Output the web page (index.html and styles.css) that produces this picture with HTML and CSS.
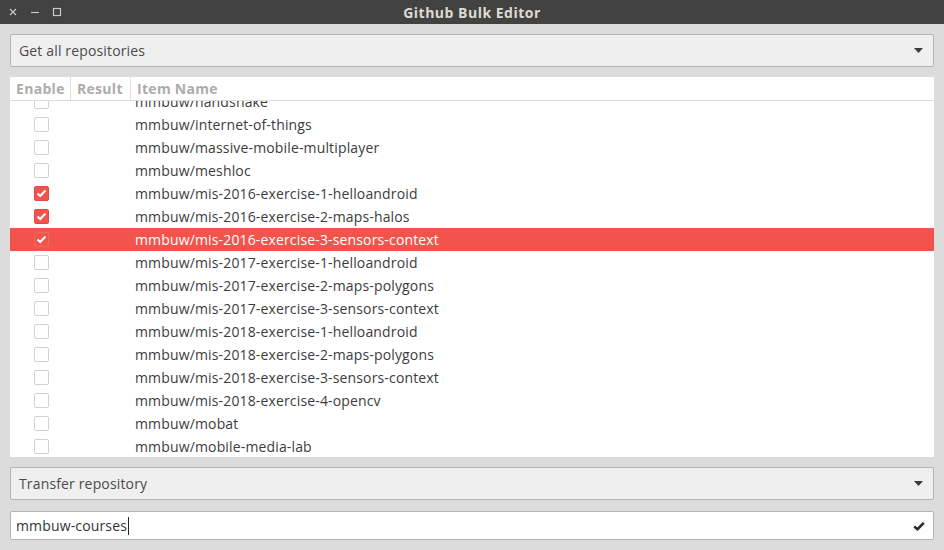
FILE: index.html
```html
<!DOCTYPE html>
<html>
<head>
<meta charset="utf-8">
<link rel="stylesheet" href="styles.css">
</head>
<body>
<div class="window">
  <div class="titlebar">
    <div class="wbtns">
      <svg class="wbtn" width="10" height="10" viewBox="0 0 10 10"><path d="M2 2L8 8M8 2L2 8" stroke="#c8c8c8" stroke-width="1.2"/></svg>
      <svg class="wbtn" width="10" height="10" viewBox="0 0 10 10"><path d="M1 5.5H9" stroke="#c8c8c8" stroke-width="1.2"/></svg>
      <svg class="wbtn" width="10" height="10" viewBox="0 0 10 10"><rect x="1.5" y="1.5" width="7" height="7" fill="none" stroke="#c8c8c8" stroke-width="1.2"/></svg>
    </div>
    <div class="title">Github Bulk Editor</div>
  </div>
  <div class="content">
    <div class="combo">
      <span>Get all repositories</span>
      <svg width="9" height="5" viewBox="0 0 9 5"><path d="M0 0H9L4.5 5Z" fill="#3c3c3c"/></svg>
    </div>
    <div class="tree">
      <div class="thead">
        <div class="th c1">Enable</div>
        <div class="th c2">Result</div>
        <div class="th c3">Item Name</div>
      </div>
      <div class="tbody">
        <div class="rows">
          <div class="row"><div class="c1"><span class="cb"></span></div><div class="c2"></div><div class="c3">mmbuw/handshake</div></div>
          <div class="row"><div class="c1"><span class="cb"></span></div><div class="c2"></div><div class="c3">mmbuw/internet-of-things</div></div>
          <div class="row"><div class="c1"><span class="cb"></span></div><div class="c2"></div><div class="c3">mmbuw/massive-mobile-multiplayer</div></div>
          <div class="row"><div class="c1"><span class="cb"></span></div><div class="c2"></div><div class="c3">mmbuw/meshloc</div></div>
          <div class="row"><div class="c1"><span class="cb on"><svg width="11" height="9" viewBox="0 0 11 9"><path d="M1.5 4.5L4.2 7L9.5 1.5" fill="none" stroke="#fff" stroke-width="2"/></svg></span></div><div class="c2"></div><div class="c3">mmbuw/mis-2016-exercise-1-helloandroid</div></div>
          <div class="row"><div class="c1"><span class="cb on"><svg width="11" height="9" viewBox="0 0 11 9"><path d="M1.5 4.5L4.2 7L9.5 1.5" fill="none" stroke="#fff" stroke-width="2"/></svg></span></div><div class="c2"></div><div class="c3">mmbuw/mis-2016-exercise-2-maps-halos</div></div>
          <div class="row sel"><div class="c1"><span class="cb on"><svg width="11" height="9" viewBox="0 0 11 9"><path d="M1.5 4.5L4.2 7L9.5 1.5" fill="none" stroke="#fff" stroke-width="2"/></svg></span></div><div class="c2"></div><div class="c3">mmbuw/mis-2016-exercise-3-sensors-context</div></div>
          <div class="row"><div class="c1"><span class="cb"></span></div><div class="c2"></div><div class="c3">mmbuw/mis-2017-exercise-1-helloandroid</div></div>
          <div class="row"><div class="c1"><span class="cb"></span></div><div class="c2"></div><div class="c3">mmbuw/mis-2017-exercise-2-maps-polygons</div></div>
          <div class="row"><div class="c1"><span class="cb"></span></div><div class="c2"></div><div class="c3">mmbuw/mis-2017-exercise-3-sensors-context</div></div>
          <div class="row"><div class="c1"><span class="cb"></span></div><div class="c2"></div><div class="c3">mmbuw/mis-2018-exercise-1-helloandroid</div></div>
          <div class="row"><div class="c1"><span class="cb"></span></div><div class="c2"></div><div class="c3">mmbuw/mis-2018-exercise-2-maps-polygons</div></div>
          <div class="row"><div class="c1"><span class="cb"></span></div><div class="c2"></div><div class="c3">mmbuw/mis-2018-exercise-3-sensors-context</div></div>
          <div class="row"><div class="c1"><span class="cb"></span></div><div class="c2"></div><div class="c3">mmbuw/mis-2018-exercise-4-opencv</div></div>
          <div class="row"><div class="c1"><span class="cb"></span></div><div class="c2"></div><div class="c3">mmbuw/mobat</div></div>
          <div class="row"><div class="c1"><span class="cb"></span></div><div class="c2"></div><div class="c3">mmbuw/mobile-media-lab</div></div>
        </div>
      </div>
    </div>
    <div class="combo">
      <span>Transfer repository</span>
      <svg width="9" height="5" viewBox="0 0 9 5"><path d="M0 0H9L4.5 5Z" fill="#3c3c3c"/></svg>
    </div>
    <div class="entry">
      <span class="etext">mmbuw-courses<span class="caret"></span></span>
      <svg width="12" height="10" viewBox="0 0 12 10"><path d="M1.2 5.5L4.5 8.2L10.8 1.8" fill="none" stroke="#2a2a2a" stroke-width="2.6"/></svg>
    </div>
  </div>
</div>
</body>
</html>
```
FILE: styles.css
```css
* { box-sizing: border-box; }
html, body { margin: 0; padding: 0; }
body {
  width: 944px;
  height: 550px;
  overflow: hidden;
  font-family: "Open Sans", "DejaVu Sans", sans-serif;
  font-size: 14px;
  letter-spacing: 0.15px;
  color: #3c3c3c;
  background: #dcdcdc;
}
.window { display: flex; flex-direction: column; height: 550px; }
.titlebar {
  height: 24px;
  background: #424242;
  display: flex;
  align-items: center;
  position: relative;
  flex-shrink: 0;
}
.wbtns { display: flex; gap: 12px; padding-left: 8px; align-items: center; z-index: 1; }
.wbtn { display: block; }
.title {
  position: absolute;
  left: 0; right: 0; top: 0; bottom: 0;
  display: flex; align-items: center; justify-content: center;
  font-weight: bold;
  color: #dfdbd2;
  font-size: 14px;
  letter-spacing: 0.5px;
}
.content {
  flex: 1;
  display: flex;
  flex-direction: column;
  padding: 10px;
  gap: 10px;
}
.combo {
  height: 33px;
  flex-shrink: 0;
  background: #efefef;
  border: 1px solid #b4b4b4;
  border-radius: 2px;
  display: flex;
  align-items: center;
  justify-content: space-between;
  padding: 0 10px 0 8px;
  color: #4a4a4a;
}
.combo svg { display: block; }
.tree {
  height: 380px;
  flex-shrink: 0;
  background: #fff;
  display: flex;
  flex-direction: column;
}
.thead {
  height: 24px;
  display: flex;
  border-bottom: 1px solid #dcdcdc;
  flex-shrink: 0;
}
.th {
  font-weight: bold;
  color: #acacac;
  display: flex;
  align-items: center;
  padding-left: 6px;
  border-right: 1px solid #e0e0e0;
  letter-spacing: 0.3px;
}
.th.c3 { border-right: none; }
.c1 { width: 61px; flex-shrink: 0; }
.c2 { width: 60px; flex-shrink: 0; }
.c3 { flex: 1; }
.tbody { flex: 1; overflow: hidden; }
.rows { margin-top: -11px; }
.row {
  height: 23px;
  display: flex;
  align-items: center;
  color: #3c3c3c;
}
.row .c1 { display: flex; justify-content: center; padding-left: 1px; }
.row .c3 { padding-left: 4px; }
.row.sel { background: #f2544d; color: #fff; }
.cb {
  width: 15px;
  height: 15px;
  border: 1px solid #d2d2d2;
  border-radius: 2px;
  background: #fff;
  display: flex;
  align-items: center;
  justify-content: center;
}
.cb.on { background: #f2544d; border-color: #e34a43; }
.sel .cb.on { border-color: #e86a64; }
.cb svg { display: block; }
.entry {
  height: 29px;
  margin-top: 1px;
  flex-shrink: 0;
  background: #fff;
  border: 1px solid #b4b4b4;
  border-radius: 2px;
  display: flex;
  align-items: center;
  justify-content: space-between;
  padding: 0 8px 0 5px;
  color: #333;
}
.etext { display: flex; align-items: center; }
.caret { display: inline-block; width: 1px; height: 18px; background: #222; margin-left: 1px; }
.entry svg { display: block; }
```
